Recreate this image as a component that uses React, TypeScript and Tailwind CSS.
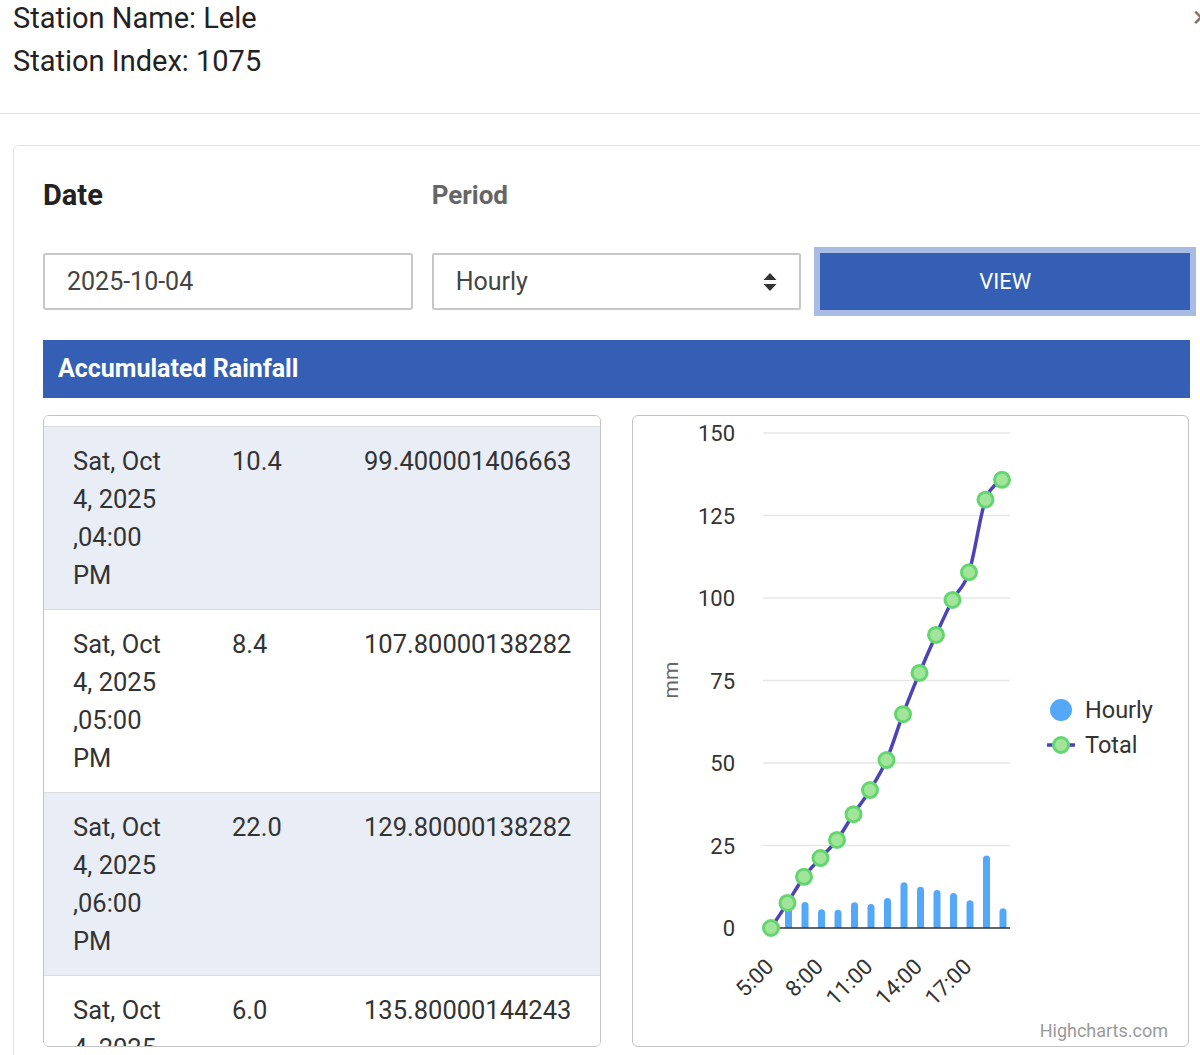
import React from "react";

const totals = [0, 7.6, 15.5, 21.2, 26.7, 34.5, 41.8, 50.9, 64.8, 77.3, 88.8, 99.4, 107.8, 129.8, 135.8];
const hourly = [0, 7.6, 7.9, 5.7, 5.5, 7.8, 7.3, 9.1, 13.9, 12.5, 11.5, 10.6, 8.4, 22.0, 6.0];

const X0 = 138;
const DX = 16.5;
const Y0 = 512;
const SC = 3.3;
const px = (i: number) => X0 + i * DX;
const py = (v: number) => Y0 - v * SC;

function splinePath(pts: [number, number][]) {
  let d = `M ${pts[0][0]} ${pts[0][1]}`;
  for (let i = 0; i < pts.length - 1; i++) {
    const p0 = pts[i - 1] || pts[i];
    const p1 = pts[i];
    const p2 = pts[i + 1];
    const p3 = pts[i + 2] || p2;
    const c1x = p1[0] + (p2[0] - p0[0]) / 6;
    const c1y = p1[1] + (p2[1] - p0[1]) / 6;
    const c2x = p2[0] - (p3[0] - p1[0]) / 6;
    const c2y = p2[1] - (p3[1] - p1[1]) / 6;
    d += ` C ${c1x} ${c1y} ${c2x} ${c2y} ${p2[0]} ${p2[1]}`;
  }
  return d;
}

function Chart() {
  const pts: [number, number][] = totals.map((v, i) => [px(i), py(v)]);
  const ticks = [0, 25, 50, 75, 100, 125, 150];
  const xl = [
    { i: 0, t: "5:00" },
    { i: 3, t: "8:00" },
    { i: 6, t: "11:00" },
    { i: 9, t: "14:00" },
    { i: 12, t: "17:00" },
  ];
  return (
    <svg width="555" height="630" viewBox="0 0 555 630" style={{ fontFamily: "Roboto, 'Liberation Sans', sans-serif" }}>
      {ticks.map((t) => (
        <g key={t}>
          {t !== 0 && <line x1="130" x2="377" y1={py(t)} y2={py(t)} stroke="#e6e6e6" strokeWidth="1.5" />}
          <text x="102" y={py(t) + 8} textAnchor="end" fontSize="22" fill="#333">
            {t}
          </text>
        </g>
      ))}
      <text x="45" y="264" fontSize="21" fill="#666" textAnchor="middle" transform="rotate(-90 45 264)">
        mm
      </text>
      {hourly.map((h, i) =>
        h > 0 ? (
          <path
            key={i}
            d={`M ${px(i) - 2.5} ${Y0} L ${px(i) - 2.5} ${py(h) + 3.5} Q ${px(i) - 2.5} ${py(h)} ${px(i) + 1} ${py(h)} Q ${px(i) + 4.5} ${py(h)} ${px(i) + 4.5} ${py(h) + 3.5} L ${px(i) + 4.5} ${Y0} Z`}
            fill="#55a8f7"
          />
        ) : null
      )}
      <line x1="130" x2="377" y1={Y0} y2={Y0} stroke="#333" strokeWidth="1.5" />
      <path d={splinePath(pts)} fill="none" stroke="#4b44b8" strokeWidth="3.5" />
      {pts.map((p, i) => (
        <circle key={i} cx={p[0]} cy={p[1]} r="7.5" fill="#a3e49b" stroke="#64d670" strokeWidth="3" />
      ))}
      {xl.map((l) => (
        <text
          key={l.t}
          x={px(l.i) + 4}
          y={552}
          fontSize="22"
          fill="#333"
          textAnchor="end"
          transform={`rotate(-45 ${px(l.i) + 4} 552)`}
        >
          {l.t}
        </text>
      ))}
      <circle cx="428" cy="294" r="11" fill="#55a8f7" />
      <text x="452" y="302" fontSize="23.5" fill="#333">
        Hourly
      </text>
      <line x1="414" x2="442" y1="329" y2="329" stroke="#4b44b8" strokeWidth="3.5" />
      <circle cx="428" cy="329" r="7.5" fill="#a3e49b" stroke="#64d670" strokeWidth="3" />
      <text x="452" y="337" fontSize="23.5" fill="#333">
        Total
      </text>
      <text x="535" y="621" fontSize="18" fill="#999" textAnchor="end">
        Highcharts.com
      </text>
    </svg>
  );
}

const rows = [
  { t: ",04:00", h: "10.4", c: "99.400001406663", bg: "bg-[#e9edf5]" },
  { t: ",05:00", h: "8.4", c: "107.80000138282", bg: "bg-white" },
  { t: ",06:00", h: "22.0", c: "129.80000138282", bg: "bg-[#e9edf5]" },
  { t: ",07:00", h: "6.0", c: "135.80000144243", bg: "bg-white" },
];

export default function App() {
  return (
    <div className="w-[1200px] h-[1055px] overflow-hidden bg-white relative font-['Roboto','Liberation_Sans',sans-serif] text-[#222]">
      <div className="absolute top-[2px] left-[1193px] text-[30px] leading-[30px] text-[#777]">×</div>
      <div className="h-[114px] border-b border-[#dedede] pl-[13px] flex flex-col gap-[7px] text-[29px] leading-[36px]">
        <div>Station Name: Lele</div>
        <div>Station Index: 1075</div>
      </div>
      <div className="mt-[31px] ml-[13px] w-[1207px] border border-[#e2e2e2] rounded-[6px] px-[29px] pt-[29px] pb-[40px]">
        <div className="grid grid-cols-3 gap-[19px] leading-[40px]">
          <div className="text-[29px] font-bold text-[#222]">Date</div>
          <div className="text-[26px] font-bold text-[#666]">Period</div>
          <div></div>
        </div>
        <div className="grid grid-cols-3 gap-[19px] mt-[38px] h-[57px]">
          <div className="border-2 border-[#c7c7c7] rounded-[3px] flex items-center pl-[22px] text-[25px] text-[#444]">
            2025-10-04
          </div>
          <div className="border-2 border-[#c7c7c7] rounded-[2px] flex items-center justify-between pl-[22px] pr-[22px] text-[25px] text-[#444]">
            <span>Hourly</span>
            <svg width="14" height="18" viewBox="0 0 14 18">
              <path d="M7 0 L13.5 7 L0.5 7 Z" fill="#333" />
              <path d="M7 18 L13.5 11 L0.5 11 Z" fill="#333" />
            </svg>
          </div>
          <div className="bg-[#345fb4] ring-[6px] ring-[#a8bbe3] flex items-center justify-center text-white text-[22px]">
            VIEW
          </div>
        </div>
        <div className="mt-[30px] h-[58px] bg-[#345fb4] flex items-center pl-[15px] text-white text-[25px] font-bold">
          Accumulated Rainfall
        </div>
        <div className="mt-[17px] grid grid-cols-[558px_557px] gap-[31px] h-[632px]">
          <div className="border border-[#c4c4c4] rounded-[6px] overflow-hidden text-[25.5px] leading-[38px] text-[#333]">
            <div className="h-[10px] bg-white"></div>
            {rows.map((r, i) => (
              <div key={i} className={`${r.bg} border-t border-[#dcdcdc] h-[183px] pt-[15px] pl-[29px] flex`}>
                <div className="w-[159px]">
                  <div>Sat, Oct</div>
                  <div>4, 2025</div>
                  <div>{r.t}</div>
                  <div>PM</div>
                </div>
                <div className="w-[132px]">{r.h}</div>
                <div>{r.c}</div>
              </div>
            ))}
          </div>
          <div className="border border-[#c4c4c4] rounded-[6px] overflow-hidden">
            <Chart />
          </div>
        </div>
      </div>
    </div>
  );
}
